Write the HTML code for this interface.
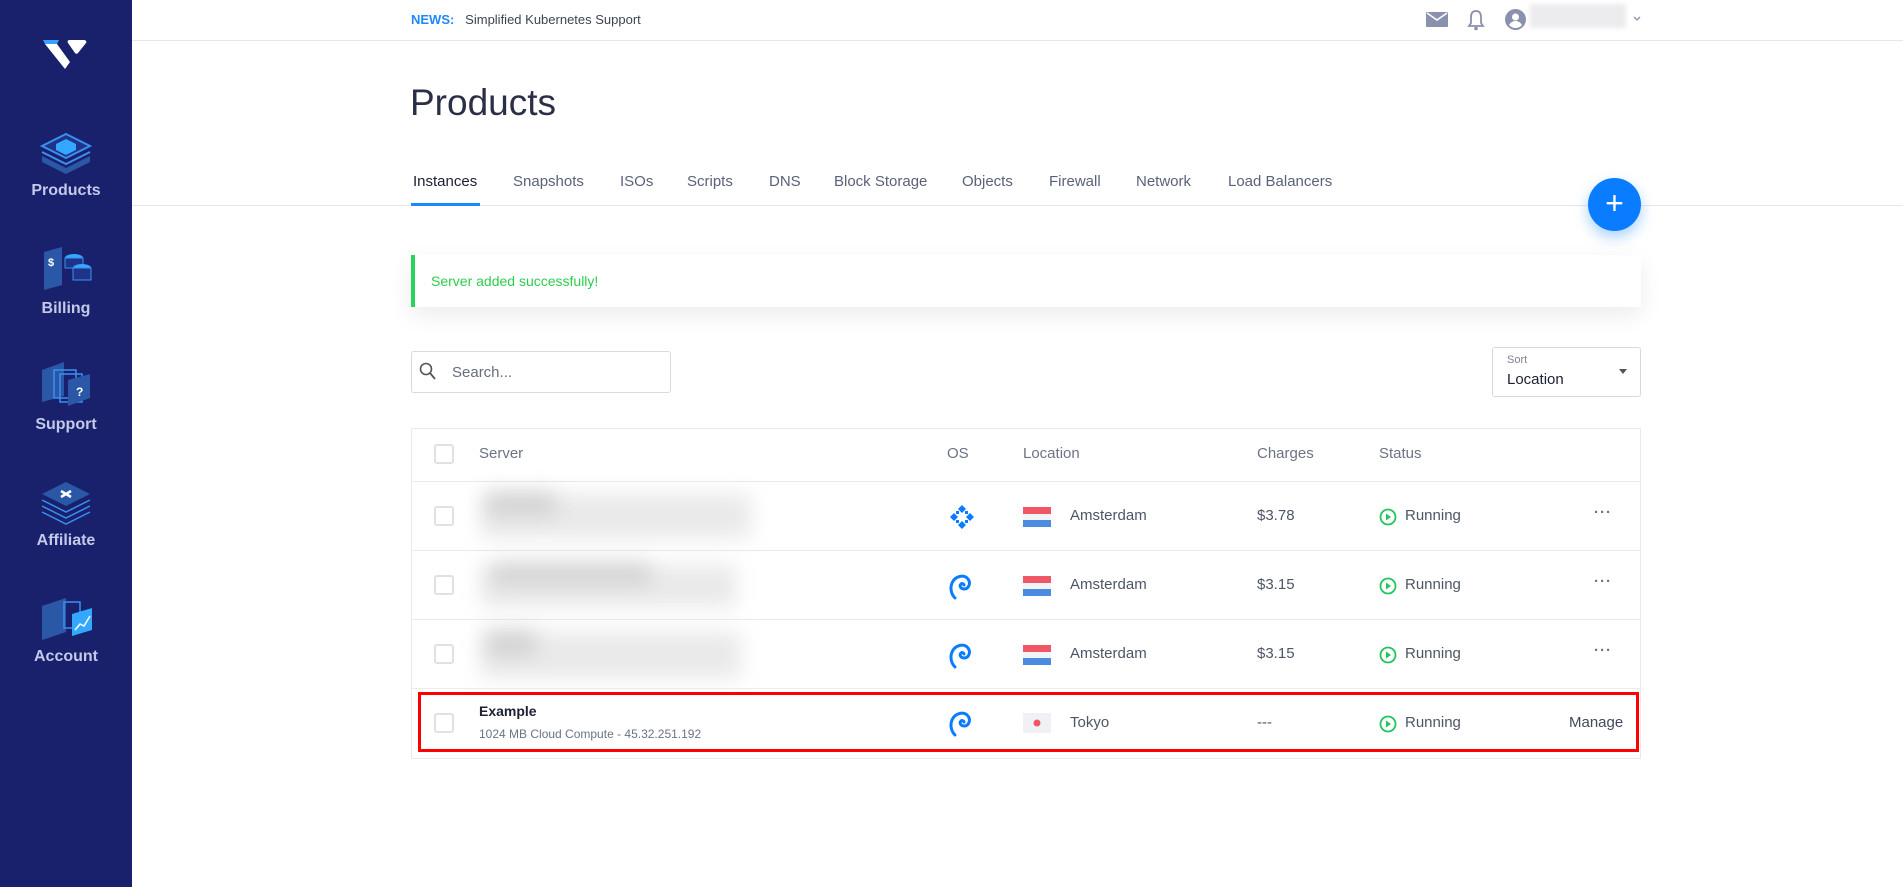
<!DOCTYPE html>
<html><head><meta charset="utf-8"><style>
*{box-sizing:border-box;margin:0;padding:0}
body{width:1903px;height:887px;overflow:hidden;background:#fff;font-family:"Liberation Sans",sans-serif;position:relative;color:#414a5b}
.side{position:absolute;left:0;top:0;width:132px;height:887px;background:#19216c}
.nav{position:absolute;left:0;width:132px;text-align:center;color:#c3c9ea;font-weight:bold;font-size:16px}
.nav svg{display:block;margin:0 auto 6px}
.abs{position:absolute}
.topline{position:absolute;left:132px;right:0;top:40px;height:1px;background:#e6e8ec}
.tabline{position:absolute;left:132px;right:0;top:205px;height:1px;background:#e6e8ec}
.tab{position:absolute;top:173px;font-size:15px;color:#59627a}
.row{position:absolute;left:411px;width:1230px;border-top:1px solid #e8eaee}
.cb{position:absolute;left:23px;width:20px;height:20px;border:2px solid #dfe1e6;border-radius:3px;background:#fff}
.txt{position:absolute;font-size:15px;color:#4d5567}
.flag{position:absolute;left:612px;width:28px;height:20px}
.blur{position:absolute;background:#d4d4d4;filter:blur(10px);opacity:.5}
</style></head><body>
<div class="side">
  <svg class="abs" style="left:42px;top:38px" width="46" height="32" viewBox="0 0 46 32"><path d="M1 2h16l-2 4H3z" fill="#3aa0ff"/><path d="M3 6h12l13 18-5 7z" fill="#fff"/><path d="M27 2h15c2 0 3 2 2 3l-8 10c-1 1-2 1-3 0l-7-10c-1-1 0-3 1-3z" fill="#fff"/></svg>
  <div class="nav" style="top:126px"><svg width="56" height="50" viewBox="0 0 56 50"><path d="M4 30l24 12 24-12v6L28 48 4 36z" fill="#2b57a7"/><path d="M4 26l24 12 24-12" stroke="#3a8ff0" stroke-width="2" fill="none"/><path d="M4 20l24 12 24-12L28 8z" stroke="#3a8ff0" stroke-width="2" fill="#1f3488"/><path d="M18 18l10-5 10 5v6l-10 5-10-5z" fill="#34a7ff"/></svg>Products</div>
  <div class="nav" style="top:244px"><svg width="56" height="50" viewBox="0 0 56 50"><path d="M6 8l18-5v38L6 46z" fill="#2b57a7"/><text x="10" y="22" fill="#fff" font-size="11" font-weight="bold" font-family="Liberation Sans">$</text><ellipse cx="36" cy="14" rx="9" ry="4" fill="#34a7ff"/><rect x="27" y="14" width="18" height="10" fill="#1f3488" stroke="#3a8ff0"/><ellipse cx="44" cy="24" rx="9" ry="4" fill="#34a7ff"/><rect x="35" y="24" width="18" height="12" fill="#1f3488" stroke="#3a8ff0"/></svg>Billing</div>
  <div class="nav" style="top:360px"><svg width="56" height="50" viewBox="0 0 56 50"><path d="M4 10l22-8v34L4 42z" fill="#2b57a7"/><rect x="16" y="10" width="22" height="28" fill="none" stroke="#3a8ff0" stroke-width="1.5"/><rect x="22" y="14" width="22" height="28" fill="none" stroke="#3a8ff0" stroke-width="1.5"/><path d="M30 20l22-6v24l-22 8z" fill="#2b57a7"/><text x="38" y="36" fill="#fff" font-size="12" font-weight="bold" font-family="Liberation Sans">?</text></svg>Support</div>
  <div class="nav" style="top:476px"><svg width="56" height="50" viewBox="0 0 56 50"><path d="M4 30l24 12 24-12M4 36l24 12 24-12M4 24l24 12 24-12" stroke="#3a8ff0" stroke-width="1.5" fill="none"/><path d="M4 18l24 12 24-12L28 6z" fill="#2b57a7"/><path d="M23 15l10 6M33 15l-10 6" stroke="#fff" stroke-width="2.5"/></svg>Affiliate</div>
  <div class="nav" style="top:592px"><svg width="56" height="50" viewBox="0 0 56 50"><path d="M4 14l24-8v34L4 48z" fill="#2b57a7"/><rect x="26" y="10" width="16" height="26" fill="none" stroke="#3a8ff0" stroke-width="1.5"/><path d="M34 22l20-6v22l-20 6z" fill="#34a7ff"/><path d="M37 38l5-6 4 2 6-10" stroke="#fff" stroke-width="1.5" fill="none"/></svg>Account</div>
</div>

<div class="abs" style="left:411px;top:12px;font-size:13px;color:#3d4453"><b style="color:#1e88ff">NEWS:</b>&nbsp;&nbsp; Simplified Kubernetes Support</div>
<svg class="abs" style="left:1426px;top:12px" width="22" height="15" viewBox="0 0 22 15"><rect width="22" height="15" rx="1" fill="#8a91ae"/><path d="M1 1l10 7 10-7" stroke="#fff" stroke-width="1.6" fill="none"/></svg>
<svg class="abs" style="left:1467px;top:9px" width="18" height="22" viewBox="0 0 18 22"><path d="M9 2c-4 0-5 3-5 6v6l-2 3h14l-2-3V8c0-3-1-6-5-6z" stroke="#8a91ae" stroke-width="1.8" fill="none"/><circle cx="9" cy="19.5" r="1.8" fill="#8a91ae"/></svg>
<svg class="abs" style="left:1505px;top:9px" width="21" height="21" viewBox="0 0 21 21"><circle cx="10.5" cy="10.5" r="10.5" fill="#8a91ae"/><circle cx="10.5" cy="8" r="3.5" fill="#fff"/><path d="M4 16c2-3 4-4 6.5-4s4.5 1 6.5 4c-2 2-4 3-6.5 3S6 18 4 16z" fill="#fff"/></svg>
<div class="abs" style="left:1530px;top:4px;width:96px;height:24px;background:#ececef;filter:blur(2px)"></div>
<svg class="abs" style="left:1633px;top:16px" width="8" height="6" viewBox="0 0 8 6"><path d="M1 1l3 3 3-3" stroke="#8a91ae" stroke-width="1.3" fill="none"/></svg>
<div class="topline"></div>

<div class="abs" style="left:410px;top:82px;font-size:37px;color:#2a2f45;font-weight:normal">Products</div>
<div class="tab" style="left:413px;color:#1c2033">Instances</div>
<div class="tab" style="left:513px">Snapshots</div>
<div class="tab" style="left:620px">ISOs</div>
<div class="tab" style="left:687px">Scripts</div>
<div class="tab" style="left:769px">DNS</div>
<div class="tab" style="left:834px">Block Storage</div>
<div class="tab" style="left:962px">Objects</div>
<div class="tab" style="left:1049px">Firewall</div>
<div class="tab" style="left:1136px">Network</div>
<div class="tab" style="left:1228px">Load Balancers</div>
<div class="tabline"></div>
<div class="abs" style="left:411px;top:203px;width:69px;height:3px;background:#1e88ff"></div>
<div class="abs" style="left:1588px;top:178px;width:53px;height:53px;border-radius:50%;background:#0a7cff;box-shadow:0 6px 14px rgba(10,124,255,.35);color:#fff;font-size:32px;text-align:center;line-height:50px">+</div>

<div class="abs" style="left:411px;top:255px;width:1230px;height:52px;background:#fff;border-left:4px solid #27d35a;box-shadow:0 8px 24px rgba(0,0,0,.08)"></div>
<div class="abs" style="left:431px;top:273px;font-size:14px;color:#2ecc4f">Server added successfully!</div>

<div class="abs" style="left:411px;top:351px;width:260px;height:42px;border:1px solid #d7dae0;border-radius:3px"></div>
<svg class="abs" style="left:419px;top:362px" width="18" height="19" viewBox="0 0 18 19"><circle cx="7" cy="7" r="5.5" stroke="#555" stroke-width="1.6" fill="none"/><path d="M11 11l5 6" stroke="#555" stroke-width="1.8"/></svg>
<div class="abs" style="left:452px;top:364px;font-size:15px;color:#666d7c">Search...</div>
<div class="abs" style="left:1492px;top:347px;width:149px;height:50px;border:1px solid #d7dae0;border-radius:3px"></div>
<div class="abs" style="left:1507px;top:354px;font-size:11px;color:#7c8392">Sort</div>
<div class="abs" style="left:1507px;top:371px;font-size:15px;color:#1c2033">Location</div>
<svg class="abs" style="left:1619px;top:369px" width="8" height="6"><path d="M0 0h8L4 5z" fill="#555"/></svg>

<div class="abs" style="left:411px;top:428px;width:1230px;height:331px;border:1px solid #e8eaee"></div>
<div class="row" style="top:428px;height:53px;border-top:none">
  <div class="cb" style="top:16px"></div>
  <div class="txt" style="left:68px;top:17px;color:#6b7384">Server</div>
  <div class="txt" style="left:536px;top:17px;color:#6b7384">OS</div>
  <div class="txt" style="left:612px;top:17px;color:#6b7384">Location</div>
  <div class="txt" style="left:846px;top:17px;color:#6b7384">Charges</div>
  <div class="txt" style="left:968px;top:17px;color:#6b7384">Status</div>
</div>

<div class="row" style="top:481px;height:69px">
  <div class="cb" style="top:24px"></div>
  <div class="blur" style="left:70px;top:12px;width:270px;height:44px"></div>
  <div class="blur" style="left:75px;top:10px;width:70px;height:24px;background:#bbb"></div>
  <svg class="abs" style="left:538px;top:22px" width="26" height="26" viewBox="0 0 26 26"><g fill="#0a7cff"><path d="M13 1l4 4-4 4-4-4z"/><path d="M13 17l4 4-4 4-4-4z"/><path d="M1 13l4-4 4 4-4 4z"/><path d="M17 13l4-4 4 4-4 4z"/><path d="M7 7h3v3H7zM16 7h3v3h-3zM7 16h3v3H7zM16 16h3v3h-3z"/></g></svg>
  <svg class="flag" style="top:25px" viewBox="0 0 28 20"><rect width="28" height="7" fill="#ef5767"/><rect y="7" width="28" height="6" fill="#f3f4f7"/><rect y="13" width="28" height="7" fill="#4c8ce0"/></svg>
  <div class="txt" style="left:659px;top:25px">Amsterdam</div>
  <div class="txt" style="left:846px;top:25px">$3.78</div>
  <svg class="abs" style="left:968px;top:26px" width="18" height="18" viewBox="0 0 18 18"><circle cx="9" cy="9" r="7.5" stroke="#22c55e" stroke-width="1.8" fill="none"/><path d="M7 5.5l5 3.5-5 3.5z" fill="#22c55e"/></svg>
  <div class="txt" style="left:994px;top:25px">Running</div>
  <div class="txt" style="left:1183px;top:22px;font-weight:bold;color:#6b7384;letter-spacing:1px">···</div>
</div>

<div class="row" style="top:550px;height:69px">
  <div class="cb" style="top:24px"></div>
  <div class="blur" style="left:70px;top:14px;width:255px;height:42px"></div>
  <div class="blur" style="left:80px;top:12px;width:160px;height:22px;background:#bbb"></div>
  <svg class="abs" style="left:538px;top:21px" width="24" height="30" viewBox="0 0 24 30"><path d="M6 26C2 22 1 16 3 11 6 4 15 2 19 7c3 4 1 10-4 10-3 0-5-3-3-5 1-1 3 0 3 1" stroke="#0a7cff" stroke-width="3" fill="none" stroke-linecap="round"/></svg>
  <svg class="flag" style="top:25px" viewBox="0 0 28 20"><rect width="28" height="7" fill="#ef5767"/><rect y="7" width="28" height="6" fill="#f3f4f7"/><rect y="13" width="28" height="7" fill="#4c8ce0"/></svg>
  <div class="txt" style="left:659px;top:25px">Amsterdam</div>
  <div class="txt" style="left:846px;top:25px">$3.15</div>
  <svg class="abs" style="left:968px;top:26px" width="18" height="18" viewBox="0 0 18 18"><circle cx="9" cy="9" r="7.5" stroke="#22c55e" stroke-width="1.8" fill="none"/><path d="M7 5.5l5 3.5-5 3.5z" fill="#22c55e"/></svg>
  <div class="txt" style="left:994px;top:25px">Running</div>
  <div class="txt" style="left:1183px;top:22px;font-weight:bold;color:#6b7384;letter-spacing:1px">···</div>
</div>

<div class="row" style="top:619px;height:69px">
  <div class="cb" style="top:24px"></div>
  <div class="blur" style="left:70px;top:12px;width:260px;height:46px"></div>
  <div class="blur" style="left:75px;top:10px;width:50px;height:26px;background:#bbb"></div>
  <svg class="abs" style="left:538px;top:21px" width="24" height="30" viewBox="0 0 24 30"><path d="M6 26C2 22 1 16 3 11 6 4 15 2 19 7c3 4 1 10-4 10-3 0-5-3-3-5 1-1 3 0 3 1" stroke="#0a7cff" stroke-width="3" fill="none" stroke-linecap="round"/></svg>
  <svg class="flag" style="top:25px" viewBox="0 0 28 20"><rect width="28" height="7" fill="#ef5767"/><rect y="7" width="28" height="6" fill="#f3f4f7"/><rect y="13" width="28" height="7" fill="#4c8ce0"/></svg>
  <div class="txt" style="left:659px;top:25px">Amsterdam</div>
  <div class="txt" style="left:846px;top:25px">$3.15</div>
  <svg class="abs" style="left:968px;top:26px" width="18" height="18" viewBox="0 0 18 18"><circle cx="9" cy="9" r="7.5" stroke="#22c55e" stroke-width="1.8" fill="none"/><path d="M7 5.5l5 3.5-5 3.5z" fill="#22c55e"/></svg>
  <div class="txt" style="left:994px;top:25px">Running</div>
  <div class="txt" style="left:1183px;top:22px;font-weight:bold;color:#6b7384;letter-spacing:1px">···</div>
</div>

<div class="row" style="top:688px;height:71px">
  <div class="cb" style="top:24px"></div>
  <div class="txt" style="left:68px;top:14px;font-weight:bold;color:#1c2033;font-size:14px">Example</div>
  <div class="txt" style="left:68px;top:38px;font-size:12px;color:#6b7384">1024 MB Cloud Compute - 45.32.251.192</div>
  <svg class="abs" style="left:538px;top:20px" width="24" height="30" viewBox="0 0 24 30"><path d="M6 26C2 22 1 16 3 11 6 4 15 2 19 7c3 4 1 10-4 10-3 0-5-3-3-5 1-1 3 0 3 1" stroke="#0a7cff" stroke-width="3" fill="none" stroke-linecap="round"/></svg>
  <svg class="flag" style="top:24px" viewBox="0 0 28 20"><rect width="28" height="20" fill="#f0f1f5"/><circle cx="14" cy="10" r="3.5" fill="#ef5767"/></svg>
  <div class="txt" style="left:659px;top:25px">Tokyo</div>
  <div class="txt" style="left:846px;top:25px">---</div>
  <svg class="abs" style="left:968px;top:26px" width="18" height="18" viewBox="0 0 18 18"><circle cx="9" cy="9" r="7.5" stroke="#22c55e" stroke-width="1.8" fill="none"/><path d="M7 5.5l5 3.5-5 3.5z" fill="#22c55e"/></svg>
  <div class="txt" style="left:994px;top:25px">Running</div>
  <div class="txt" style="left:1158px;top:25px;color:#414a5b">Manage</div>
</div>
<div class="abs" style="left:418px;top:692px;width:1221px;height:60px;border:3px solid #f00"></div>
</body></html>
